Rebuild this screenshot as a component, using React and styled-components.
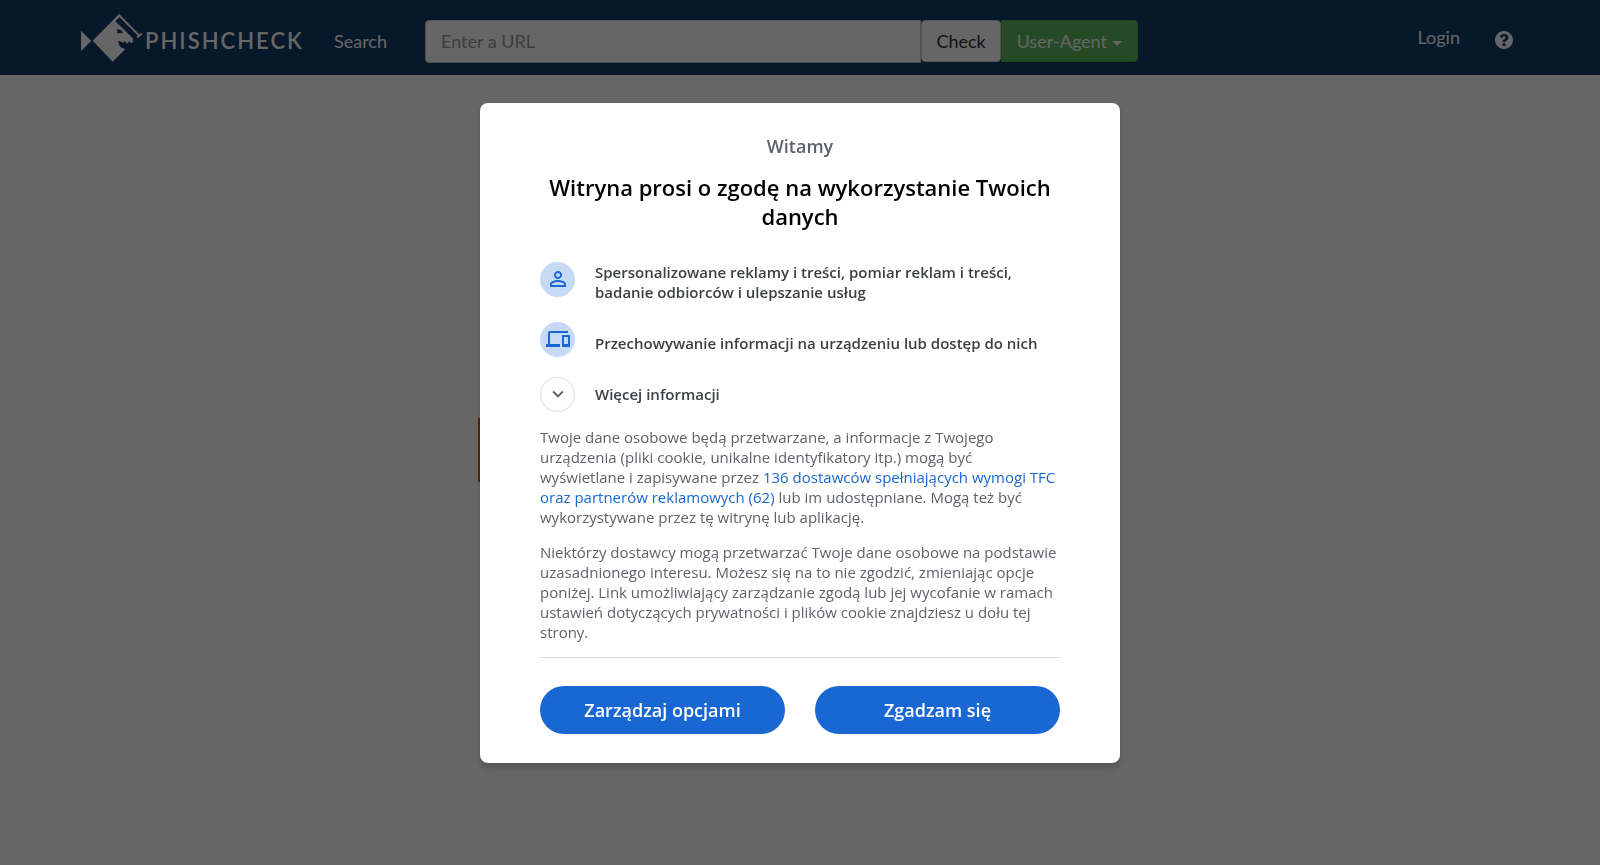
import React from "react";
import styled, { createGlobalStyle, css } from "styled-components";

const Global = createGlobalStyle`
  *, *::before, *::after { box-sizing: border-box; }
  body {
    margin: 0;
    background: #fff;
    font-family: "Open Sans", "Noto Sans", sans-serif;
  }
  button, input { font-family: inherit; }
`;

const siteFont = css`
  font-family: Lato, "Open Sans", sans-serif;
  font-size: 18px;
  line-height: 26px;
`;

const Page = styled.div`
  min-height: 100vh;
  display: flex;
  flex-direction: column;
`;

const Navbar = styled.nav`
  ${siteFont}
  height: 75px;
  padding: 0 80px;
  background: #0f3c69;
  display: flex;
  align-items: flex-start;
  color: #fff;
`;

const Brand = styled.a`
  display: flex;
  align-items: center;
  gap: 3px;
  flex: none;
  width: 222px;
  margin-top: 8px;
  color: #fff;
  text-decoration: none;

  svg { flex: none; }
`;

const BrandName = styled.span`
  font: 600 22px/30px Lato, sans-serif;
  letter-spacing: 2px;
  padding-top: 6px;
`;

const NavLink = styled.a`
  color: #fff;
  text-decoration: none;
  padding: 28px 0 20px;
  margin-left: 32px;
`;

const SearchForm = styled.form`
  display: flex;
  align-items: flex-start;
  flex: 0 1 713px;
  margin: 20px auto 0 38px;
`;

const UrlInput = styled.input`
  ${siteFont}
  flex: 1;
  min-width: 0;
  height: 43px;
  padding: 6px 15px 8px;
  border: 1px solid #ccc;
  border-radius: 4px 0 0 4px;
  background: #fff;
  &::placeholder { color: #999; opacity: 1; }
`;

const FormButton = styled.button`
  ${siteFont}
  height: 42px;
  padding: 0 ${(p) => (p.$green ? 15 : 14)}px;
  display: flex;
  align-items: center;
  gap: 5px;
  white-space: nowrap;
  border: 1px solid ${(p) => (p.$green ? "#4cae4c" : "#ccc")};
  border-radius: ${(p) => (p.$green ? "0 4px 4px 0" : "4px")};
  background: ${(p) => (p.$green ? "#5cb85c" : "#fff")};
  color: ${(p) => (p.$green ? "#fff" : "#333")};
`;

const Caret = styled.span`
  border: 5px solid transparent;
  border-top-color: currentColor;
  border-bottom: 0;
  margin-top: 4px;
`;

const LoginLink = styled(NavLink)`
  padding-top: 24px;
`;

const HelpLink = styled.a`
  display: flex;
  color: #fff;
  margin: 31px 7px 0 35px;
`;

const Content = styled.main`
  flex: 1;
  display: flex;
  justify-content: center;
  align-items: flex-start;
  padding: 343px 4px 0 0;
`;

const Banner = styled.div`
  width: 640px;
  height: 64px;
  background: #dd4814;
`;

const Overlay = styled.div`
  position: fixed;
  inset: 0;
  background: rgba(0, 0, 0, 0.6);
  display: flex;
  align-items: center;
  justify-content: center;
`;

const Dialog = styled.section`
  width: 640px;
  max-width: 100%;
  padding: 29px 60px;
  background: #fff;
  border-radius: 8px;
  box-shadow: 0 8px 12px rgba(60, 64, 67, 0.15), 0 4px 4px rgba(60, 64, 67, 0.3);
  color: #5f6368;
`;

const Welcome = styled.p`
  margin: 0;
  font-size: 18px;
  line-height: 28px;
  font-weight: 600;
  text-align: center;
`;

const Title = styled.h1`
  margin: 13px 0 31px;
  font-size: 22px;
  line-height: 29px;
  font-weight: 600;
  text-align: center;
  color: #000;
`;

const Purpose = styled.div`
  display: flex;
  align-items: ${(p) => (p.$end ? "flex-end" : "flex-start")};
  gap: 20px;
  margin-bottom: 20px;
  color: #3c4043;
  font-size: 15px;
  line-height: 20px;
  font-weight: 600;
`;

const PurposeText = styled.span`
  padding-bottom: ${(p) => (p.$raised ? 4 : 0)}px;
`;

const Badge = styled.span`
  flex: none;
  width: 35px;
  height: 35px;
  border-radius: 50%;
  background: #c7daf5;
  color: #1967d2;
  display: flex;
  align-items: center;
  justify-content: center;
`;

const MoreButton = styled.button`
  display: flex;
  align-items: center;
  gap: 20px;
  padding: 0;
  margin-bottom: 15px;
  border: 0;
  background: none;
  color: #3c4043;
  font-size: 15px;
  line-height: 20px;
  font-weight: 600;
`;

const OutlineBadge = styled(Badge)`
  background: #fff;
  border: 1px solid #dadce0;
  color: #5f6368;
`;

const Text = styled.p`
  margin: 0 0 15px;
  font-size: 15px;
  line-height: 20px;
`;

const VendorLink = styled.a`
  color: #1967d2;
  text-decoration: none;
`;

const Actions = styled.div`
  display: grid;
  grid-template-columns: 1fr 1fr;
  gap: 30px;
  padding-top: 28px;
  border-top: 1px solid #dadce0;
`;

const Action = styled.button`
  height: 48px;
  border: 0;
  border-radius: 24px;
  background: #1967d2;
  color: #fff;
  font-size: 18px;
  line-height: 24px;
  font-weight: 600;
`;

const FishLogo = () => (
  <svg width="62" height="60" viewBox="12 0 186 180" fill="currentColor" aria-hidden="true">
    <path d="M15 68 46 99 15 129Z" />
    <path
      fillRule="evenodd"
      d="M50 98 129 18 134 24 118 40 171 91 170 103 165 106 161 99 156 105 150 106 147 98 142 104 127 98 128 108 133 117 148 123 110 161ZM123 63 124 76 141 75 136 67Z"
    />
    <path d="M128 21 189 82M183 88 198 77" fill="none" stroke="currentColor" strokeWidth="6" />
  </svg>
);

export default function App() {
  return (
    <Page>
      <Global />
      <Navbar>
        <Brand href="#" aria-label="PHISHCHECK">
          <FishLogo />
          <BrandName>PHISHCHECK</BrandName>
        </Brand>
        <NavLink href="#">Search</NavLink>
        <SearchForm onSubmit={(e) => e.preventDefault()}>
          <UrlInput type="text" placeholder="Enter a URL" aria-label="Enter a URL" />
          <FormButton type="submit">Check</FormButton>
          <FormButton type="button" $green aria-haspopup="true">
            User-Agent
            <Caret />
          </FormButton>
        </SearchForm>
        <LoginLink href="#">Login</LoginLink>
        <HelpLink href="#" aria-label="Help">
          <svg width="18" height="18" viewBox="8 8 496 496" fill="currentColor" aria-hidden="true">
            <path d="M504 256c0 137-111 248-248 248S8 393 8 256 119 8 256 8s248 111 248 248zM262.700 90c-54.500 0-89.300 23-116.500 63.800-3.500 5.300-2.400 12.400 2.700 16.300l34.700 26.300c5.200 3.900 12.600 3 16.700-2.100 17.900-22.700 30.100-35.800 57.300-35.800 20.400 0 45.700 13.100 45.700 33 0 15-12.400 22.700-32.500 34C247.100 238.500 216 254.900 216 296v4c0 6.600 5.400 12 12 12h56c6.600 0 12-5.400 12-12v-1.300c0-28.500 83.200-29.600 83.200-106.700 0-58-60.200-102-116.500-102zM256 338c-25.400 0-46 20.600-46 46s20.600 46 46 46 46-20.600 46-46-20.600-46-46-46z" />
          </svg>
        </HelpLink>
      </Navbar>
      <Content>
        <Banner />
      </Content>
      <Overlay>
        <Dialog role="dialog" aria-modal="true" aria-labelledby="consent-title">
          <Welcome>Witamy</Welcome>
          <Title id="consent-title">Witryna prosi o zgodę na wykorzystanie Twoich danych</Title>
          <Purpose>
            <Badge>
              <svg width="24" height="24" viewBox="0 0 24 24" fill="currentColor" aria-hidden="true">
                <path d="M12 5.900a2.100 2.100 0 1 1 0 4.200 2.100 2.100 0 0 1 0-4.200m0 9c2.970 0 6.100 1.460 6.100 2.100v1.100H5.900V17c0-.64 3.130-2.100 6.100-2.100M12 4C9.790 4 8 5.790 8 8s1.790 4 4 4 4-1.790 4-4-1.790-4-4-4zm0 9c-2.670 0-8 1.340-8 4v3h16v-3c0-2.660-5.330-4-8-4z" />
              </svg>
            </Badge>
            <PurposeText>
              Spersonalizowane reklamy i treści, pomiar reklam i treści, badanie odbiorców i ulepszanie usług
            </PurposeText>
          </Purpose>
          <Purpose $end>
            <Badge>
              <svg width="24" height="24" viewBox="0 0 24 24" fill="currentColor" aria-hidden="true">
                <path d="M4 6h18V4H4c-1.100 0-2 .9-2 2v11H0v3h14v-3H4V6zm19 2h-6c-.55 0-1 .45-1 1v10c0 .55.45 1 1 1h6c.55 0 1-.45 1-1V9c0-.55-.45-1-1-1zm-1 9h-4v-7h4v7z" />
              </svg>
            </Badge>
            <PurposeText $raised>Przechowywanie informacji na urządzeniu lub dostęp do nich</PurposeText>
          </Purpose>
          <MoreButton type="button" aria-expanded="false">
            <OutlineBadge>
              <svg width="22" height="22" viewBox="0 0 24 24" fill="currentColor" aria-hidden="true">
                <path d="M16.590 8.590 12 13.170 7.410 8.590 6 10l6 6 6-6z" />
              </svg>
            </OutlineBadge>
            Więcej informacji
          </MoreButton>
          <Text>
            Twoje dane osobowe będą przetwarzane, a informacje z Twojego urządzenia (pliki cookie, unikalne identyfikatory itp.) mogą być wyświetlane i zapisywane przez{" "}
            <VendorLink href="#">136 dostawców spełniających wymogi TFC oraz partnerów reklamowych (62)</VendorLink>{" "}
            lub im udostępniane. Mogą też być wykorzystywane przez tę witrynę lub aplikację.
          </Text>
          <Text>
            Niektórzy dostawcy mogą przetwarzać Twoje dane osobowe na podstawie uzasadnionego interesu. Możesz się na to nie zgodzić, zmieniając opcje poniżej. Link umożliwiający zarządzanie zgodą lub jej wycofanie w ramach ustawień dotyczących prywatności i plików cookie znajdziesz u dołu tej strony.
          </Text>
          <Actions>
            <Action type="button">Zarządzaj opcjami</Action>
            <Action type="button">Zgadzam się</Action>
          </Actions>
        </Dialog>
      </Overlay>
    </Page>
  );
}
